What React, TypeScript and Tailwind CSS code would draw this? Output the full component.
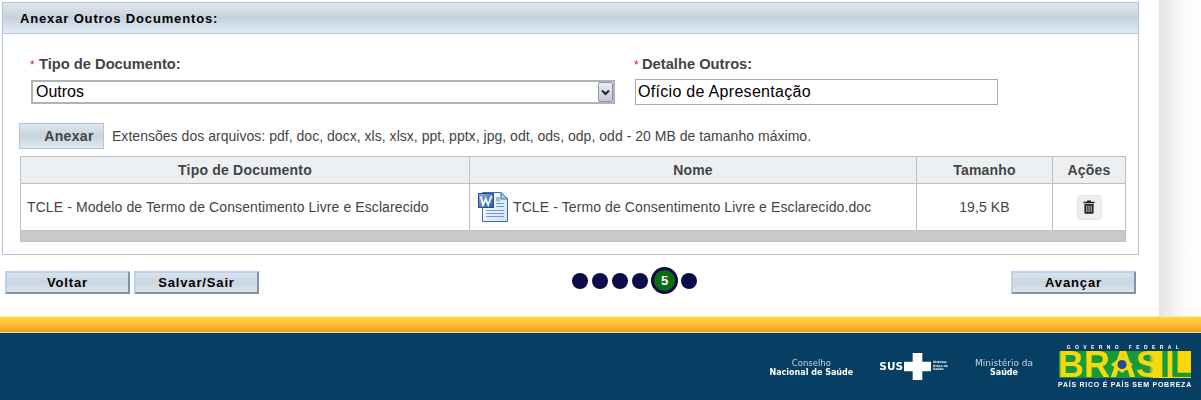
import React from "react";

function WordIcon() {
  return (
    <svg width="30" height="30" viewBox="0 0 30 30" className="shrink-0">
      <defs>
        <linearGradient id="pg" x1="0" y1="0" x2="1" y2="1">
          <stop offset="0" stopColor="#ffffff" />
          <stop offset="1" stopColor="#cfe0f2" />
        </linearGradient>
        <linearGradient id="bl" x1="0" y1="0" x2="1" y2="1">
          <stop offset="0" stopColor="#8fb2e2" />
          <stop offset="1" stopColor="#2a58a8" />
        </linearGradient>
      </defs>
      <path d="M4.5 .5H23L29.5 7V29.5H4.5Z" fill="url(#pg)" stroke="#3f6fa8" />
      <path d="M23 .5V7H29.5Z" fill="#b9d0ea" stroke="#3f6fa8" />
      <g stroke="#6f9bcc" strokeWidth="1">
        <path d="M18 11.5H26M18 14.5H26M8 18.5H26M8 21.5H26M8 24.5H26" />
      </g>
      <rect x="18" y="5" width="4.5" height="4.5" fill="#9dbbe0" />
      <rect x=".5" y="1.5" width="15" height="14" fill="url(#bl)" stroke="#274f8f" />
      <path d="M2.8 4.5L5 13L7.8 7L10.2 13L13.5 4" fill="none" stroke="#fff" strokeWidth="1.7" />
    </svg>
  );
}

function Trash() {
  return (
    <svg width="12" height="14" viewBox="0 0 12 14">
      <path d="M4 1.7V.6h4v1.1h3.6v1.6H.4V1.7Z" fill="#222" />
      <path d="M1.4 4h9.2v8.6c0 .8-.5 1.2-1.2 1.2H2.6c-.7 0-1.2-.4-1.2-1.2Z" fill="#222" />
      <path d="M3.8 5.5v6.6M6 5.5v6.6M8.2 5.5v6.6" stroke="#ddd" strokeWidth=".9" />
    </svg>
  );
}

function NavButton({ children, className }: { children: React.ReactNode; className?: string }) {
  return (
    <button
      className={
        "mt-[4px] h-[23px] w-[125px] border-2 border-t-[#b9d2f2] border-l-[#b9d2f2] border-r-[#8090aa] border-b-[#8090aa] bg-gradient-to-b from-[#d9e3ea] via-[#c9d5e0] to-[#dbe5ee] text-[13px] font-bold tracking-[0.85px] text-black leading-none " +
        (className ?? "")
      }
    >
      {children}
    </button>
  );
}

function Dot() {
  return <span className="h-[16px] w-[16px] rounded-full bg-[#0b0b4b]" />;
}

function BrasilLogo() {
  return (
    <div className="flex w-[132px] flex-col items-center blur-[0.4px]">
      <div className="text-[5px] font-bold leading-[6px] tracking-[4.4px] text-white whitespace-nowrap">GOVERNO FEDERAL</div>
      <div className="relative mt-[1px] flex h-[27px] w-[132px] justify-center bg-gradient-to-r from-[#169a3c] from-[68%] to-[#f5d90a] to-[72%] text-[36px] font-bold leading-[27px] whitespace-nowrap">
        <span className="text-[#f5d90a]">BRAS</span>
        <span className="text-[#169a3c]">IL</span>
        <svg className="absolute left-[52px] top-[5px]" width="22" height="17" viewBox="0 0 22 17">
          <path d="M11 0L22 8.5L11 17L0 8.5Z" fill="#f6d80f" />
          <circle cx="11" cy="8.5" r="4.6" fill="#1d4f9c" />
        </svg>
      </div>
      <div className="mt-[3px] text-[7px] font-bold leading-[8px] tracking-[0.75px] text-white whitespace-nowrap">PAÍS RICO É PAÍS SEM POBREZA</div>
    </div>
  );
}

export default function App() {
  const font = "[font-family:'Liberation_Sans',Arial,sans-serif]";
  const logoFont = "[font-family:'DejaVu_Sans',sans-serif]";
  return (
    <div className={"h-[400px] w-[1201px] overflow-hidden bg-white " + font}>
      <div className="flex h-[316px]">
        <div className="w-[1159px] pl-[2px] pt-[2px]">
          <section className="h-[253px] w-[1137px] border border-[#b3c5d8]">
            <div className="flex h-[31px] items-center border-b border-[#b3c5d8] bg-gradient-to-b from-[#dfe7ee] via-[#c5d2de] to-[#e1ecf6] pl-[17px]">
              <h2 className="text-[13px] font-bold leading-none tracking-[0.85px] text-black">Anexar Outros Documentos:</h2>
            </div>
            <div className="flex pl-[28px] pt-[21px]">
              <div className="w-[584px]">
                <div className="-ml-[1px] flex h-[19px] items-center text-[14.7px] font-bold leading-none text-[#444]">
                  <span className="mr-[6px] w-[3px] text-[12px] font-normal text-[#f02020]">*</span>
                  Tipo de Documento:
                </div>
                <div className="relative mt-[6px]">
                  <select className="h-[24px] w-[584px] appearance-none border-2 border-[#b0b2ba] bg-white pl-[3px] text-[16px] leading-none text-black outline-none">
                    <option>Outros</option>
                  </select>
                  <span className="absolute right-[2px] top-[2px] flex h-[20px] w-[15px] items-center justify-center rounded-[2px] border border-[#8f93a8] bg-gradient-to-b from-[#eceef5] to-[#c5c7d8]">
                    <svg width="9" height="7" viewBox="0 0 9 7">
                      <path d="M1 1.5L4.5 5L8 1.5" fill="none" stroke="#222" strokeWidth="2" />
                    </svg>
                  </span>
                </div>
              </div>
              <div className="ml-[20px]">
                <div className="-ml-[1px] flex h-[19px] items-center text-[14.7px] font-bold leading-none text-[#444]">
                  <span className="mr-[5px] w-[3px] text-[12px] font-normal text-[#f02020]">*</span>
                  Detalhe Outros:
                </div>
                <input
                  readOnly
                  value="Ofício de Apresentação"
                  className="mt-[5px] block h-[26px] w-[363px] border border-[#a9abb3] bg-white pl-[2px] text-[16px] tracking-[0.3px] text-black outline-none"
                />
              </div>
            </div>
            <div className="flex items-center pl-[16px] pt-[18px]">
              <button className="h-[26px] w-[85px] border border-[#b3c5d8] bg-gradient-to-b from-[#dde6ee] via-[#c7d4df] to-[#dfe9f2] pl-[15px] text-[14px] font-bold tracking-[0.3px] text-[#444]">
                Anexar
              </button>
              <p className="ml-[8px] text-[14px] leading-none tracking-[0.03px] text-[#444]">
                Extensões dos arquivos: pdf, doc, docx, xls, xlsx, ppt, pptx, jpg, odt, ods, odp, odd - 20 MB de tamanho máximo.
              </p>
            </div>
            <div className="ml-[17px] mt-[7px] w-[1106px] border border-[#c0c0c0] text-[14px] text-[#444]">
              <div className="grid h-[27px] grid-cols-[449px_447px_136px_1fr] border-b border-[#c0c0c0] bg-[#edf0f3] font-bold tracking-[0.2px]">
                <div className="flex items-center justify-center border-r border-[#c0c0c0]">Tipo de Documento</div>
                <div className="flex items-center justify-center border-r border-[#c0c0c0]">Nome</div>
                <div className="flex items-center justify-center border-r border-[#c0c0c0]">Tamanho</div>
                <div className="flex items-center justify-center">Ações</div>
              </div>
              <div className="grid h-[47px] grid-cols-[449px_447px_136px_1fr] border-b border-[#c0c0c0] tracking-[0.1px]">
                <div className="flex items-center border-r border-[#c0c0c0] pl-[6px]">TCLE - Modelo de Termo de Consentimento Livre e Esclarecido</div>
                <div className="flex items-center gap-[5px] border-r border-[#c0c0c0] pl-[8px]">
                  <WordIcon />
                  <span>TCLE - Termo de Consentimento Livre e Esclarecido.doc</span>
                </div>
                <div className="flex items-center justify-center border-r border-[#c0c0c0]">19,5 KB</div>
                <div className="flex items-center justify-center">
                  <span className="flex h-[25px] w-[25px] items-center justify-center rounded-[4px] border border-[#e4e4e4] bg-[#eeeeee]">
                    <Trash />
                  </span>
                </div>
              </div>
              <div className="h-[10px] bg-[#cacaca]" />
            </div>
          </section>
          <div className="mt-[12px] flex items-start pl-[3px]">
            <NavButton>Voltar</NavButton>
            <NavButton className="ml-[4px]">Salvar/Sair</NavButton>
            <div className="ml-[313px] flex h-[27px] w-[128px] items-center gap-[4px]">
              <Dot />
              <Dot />
              <Dot />
              <Dot />
              <span className="mx-[-1px] flex h-[27px] w-[27px] shrink-0 items-center justify-center rounded-full border-[3px] border-[#0b0b4b] bg-[#0a6b12] text-[13px] font-bold text-white">5</span>
              <Dot />
            </div>
            <NavButton className="ml-[311px]">Avançar</NavButton>
          </div>
        </div>
        <div className="flex-1 bg-gradient-to-r from-[#e2e2e2] via-[#f8f8f8] to-white" />
      </div>
      <div className="h-[16px] border-t border-[#fde9a8] bg-gradient-to-b from-[#fed840] to-[#f79c20]" />
      <footer className={"flex h-[68px] items-center justify-end border-t border-[#f6d9a8] bg-[#063f63] pr-[10px] text-center text-white " + logoFont}>
        <div className="mt-[3px] mr-[25px] w-[86px] text-[8.5px] leading-[9px] blur-[0.3px]">
          <div className="text-[#c8d4dc]">Conselho</div>
          <div className="text-[8px] font-bold">Nacional de Saúde</div>
        </div>
        <div className="mr-[26px] flex items-center blur-[0.3px]">
          <span className="text-[10.5px] font-bold leading-none">SUS</span>
          <svg width="27" height="27" viewBox="0 0 28 28" className="ml-[1px]">
            <path d="M9 0H19V9H28V19H19V28H9V19H0V9H9Z" fill="#fff" />
          </svg>
          <span className="ml-[2px] w-[15px] text-left text-[3px] font-bold leading-[3.5px]">Sistema Único de Saúde</span>
        </div>
        <div className="mt-[3px] mr-[25px] w-[60px] text-[9px] leading-[9px] blur-[0.3px]">
          <div className="whitespace-nowrap text-[#c8d4dc]">Ministério da</div>
          <div className="text-[8px] font-bold">Saúde</div>
        </div>
        <div className={font}>
          <BrasilLogo />
        </div>
      </footer>
    </div>
  );
}
